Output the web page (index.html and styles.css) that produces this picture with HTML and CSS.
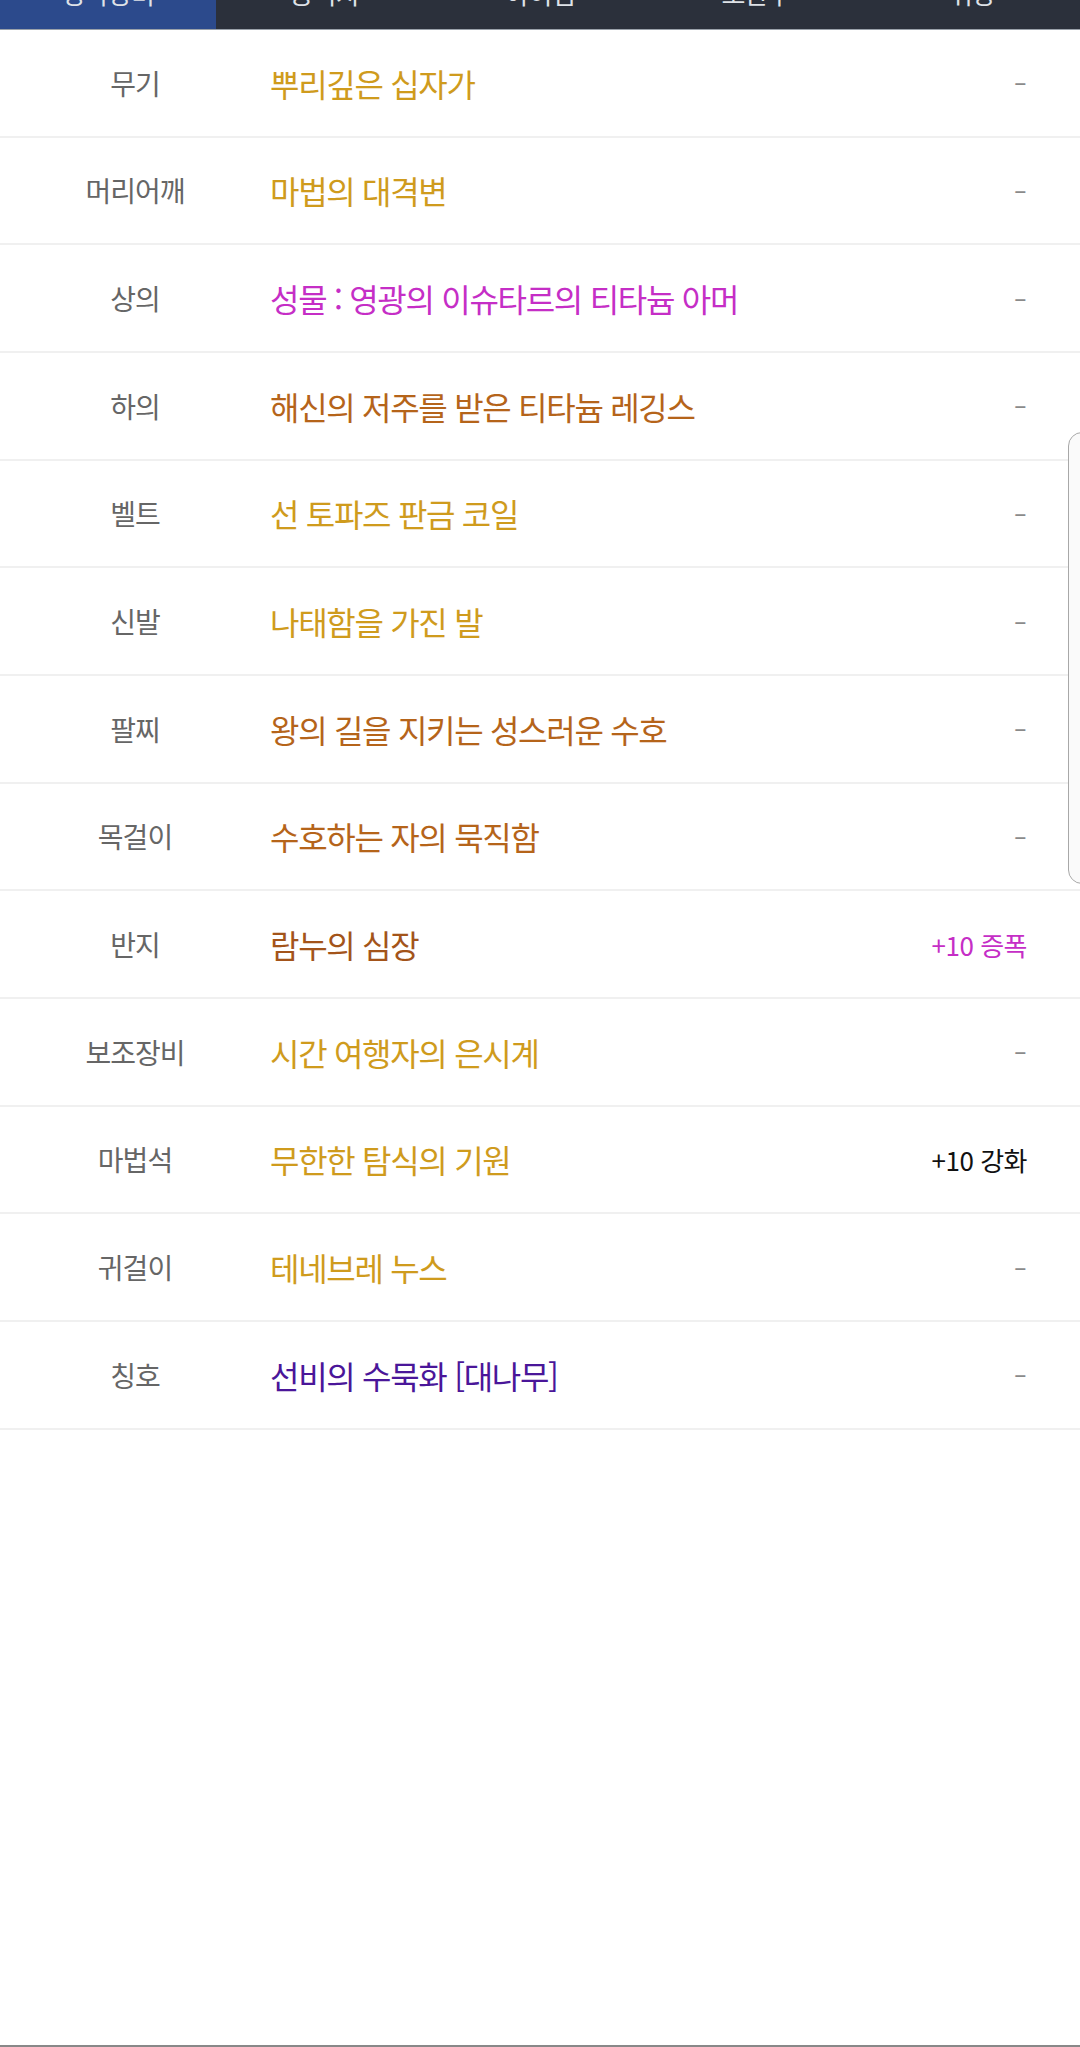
FILE: index.html
```html
<!DOCTYPE html>
<html lang="ko">
<head>
    <meta charset="UTF-8">
    <link rel="stylesheet" href="styles.css">
    <title>장착장비</title>
</head>
<body>

    <div class="tabs">
        <a class="tab active">장착장비</a>
        <a class="tab">능력치</a>
        <a class="tab">아이템</a>
        <a class="tab">소환수</a>
        <a class="tab">위상</a>
    </div>

    <div class="equip-list">
        <div class="equip-row">
            <span class="slot">무기</span>
            <span class="item gold">뿌리깊은 십자가</span>
            <span class="extra none">-</span>
        </div>
        <div class="equip-row">
            <span class="slot">머리어깨</span>
            <span class="item gold">마법의 대격변</span>
            <span class="extra none">-</span>
        </div>
        <div class="equip-row">
            <span class="slot">상의</span>
            <span class="item pink">성물 : 영광의 이슈타르의 티타늄 아머</span>
            <span class="extra none">-</span>
        </div>
        <div class="equip-row">
            <span class="slot">하의</span>
            <span class="item brown">해신의 저주를 받은 티타늄 레깅스</span>
            <span class="extra none">-</span>
        </div>
        <div class="equip-row">
            <span class="slot">벨트</span>
            <span class="item gold">선 토파즈 판금 코일</span>
            <span class="extra none">-</span>
        </div>
        <div class="equip-row">
            <span class="slot">신발</span>
            <span class="item gold">나태함을 가진 발</span>
            <span class="extra none">-</span>
        </div>
        <div class="equip-row">
            <span class="slot">팔찌</span>
            <span class="item brown">왕의 길을 지키는 성스러운 수호</span>
            <span class="extra none">-</span>
        </div>
        <div class="equip-row">
            <span class="slot">목걸이</span>
            <span class="item brown">수호하는 자의 묵직함</span>
            <span class="extra none">-</span>
        </div>
        <div class="equip-row">
            <span class="slot">반지</span>
            <span class="item dark-brown">람누의 심장</span>
            <span class="extra pink">+10 증폭</span>
        </div>
        <div class="equip-row">
            <span class="slot">보조장비</span>
            <span class="item gold">시간 여행자의 은시계</span>
            <span class="extra none">-</span>
        </div>
        <div class="equip-row">
            <span class="slot">마법석</span>
            <span class="item gold">무한한 탐식의 기원</span>
            <span class="extra">+10 강화</span>
        </div>
        <div class="equip-row">
            <span class="slot">귀걸이</span>
            <span class="item gold">테네브레 누스</span>
            <span class="extra none">-</span>
        </div>
        <div class="equip-row">
            <span class="slot">칭호</span>
            <span class="item purple">선비의 수묵화 [대나무]</span>
            <span class="extra none">-</span>
        </div>
    </div>

    <div class="scroll-thumb"></div>
    <div class="bottom-line"></div>

</body>
</html>
```

FILE: styles.css
```css
html, body {
    overflow: hidden;
}

body {
    margin: 0;
    background-color: #fff;
    font-family: "Noto Sans CJK KR", "Noto Sans", sans-serif;
}

/* Tab bar (scrolled, only the bottom is visible) */
.tabs {
    display: flex;
    height: 60px;
    margin-top: -31px;
    background-color: #2b303b;
    border-bottom: 1px solid #9aa1aa;
}

.tab {
    flex: 1;
    display: flex;
    align-items: center;
    justify-content: center;
    padding-bottom: 14px;
    color: #dfe2e7;
    font-size: 26px;
    letter-spacing: -1px;
}

.tab.active {
    background-color: #2c4a8c;
}

/* Equipment list */
.equip-row {
    display: grid;
    grid-template-columns: 270px 1fr auto;
    align-items: center;
    height: 107.67px;
    box-sizing: border-box;
    padding-right: 53px;
    border-bottom: 2px solid #f0f0f0;
}

.slot {
    text-align: center;
    color: #666;
    font-size: 28px;
    letter-spacing: -1px;
}

.item {
    font-size: 32px;
    letter-spacing: -1.3px;
}

.extra {
    color: #111;
    font-size: 26px;
    letter-spacing: -0.5px;
}

.extra.none {
    display: inline-block;
    color: #8a8a8a;
    letter-spacing: 0;
    transform: scaleX(1.5);
    transform-origin: right center;
}

.gold {
    color: #cf9b1d;
}

.brown {
    color: #b5641a;
}

.dark-brown {
    color: #a3541a;
}

.pink {
    color: #c52ec6;
}

.purple {
    color: #4a1699;
}

/* Overlay scroll thumb at the right edge */
.scroll-thumb {
    position: fixed;
    top: 432px;
    left: 1068px;
    width: 40px;
    height: 450px;
    border: 1.5px solid #a8a8a8;
    border-radius: 14px;
    background-color: #fafafa;
}

.bottom-line {
    position: fixed;
    left: 0;
    right: 0;
    bottom: 0;
    height: 2px;
    background-color: #888;
}
```
